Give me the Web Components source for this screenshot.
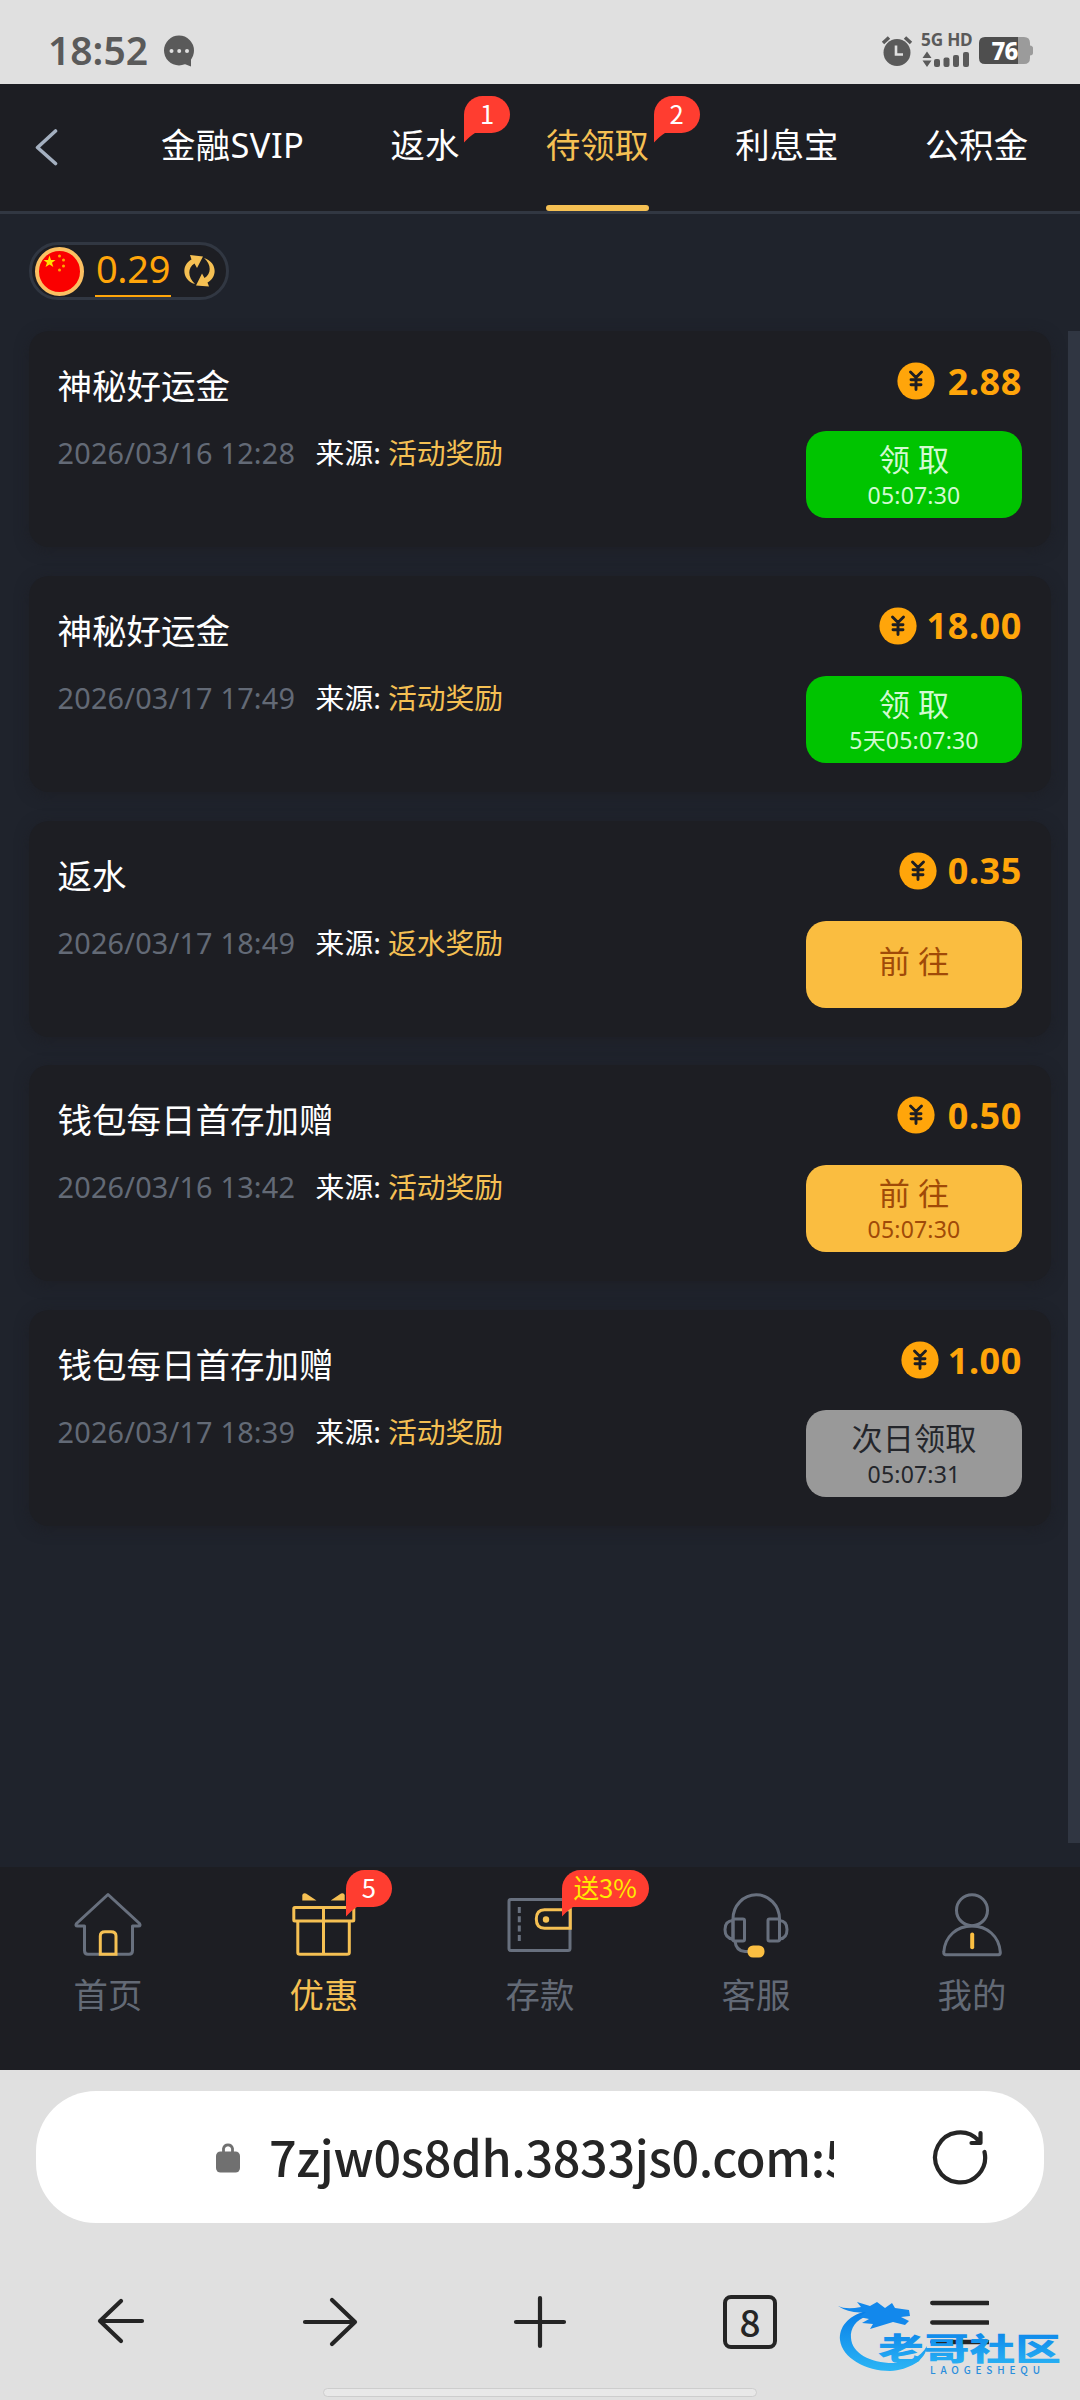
<!DOCTYPE html>
<html lang="zh-CN">
<head>
<meta charset="utf-8">
<title>待领取</title>
<style>
html,body{margin:0;padding:0}
body{width:1080px;height:2400px;overflow:hidden;background:#1f232c;font-family:"Noto Sans","Noto Sans CJK SC",sans-serif;color:#fff}
</style>
</head>
<body>
<phone-screen>
  <status-bar slot="status" time="18:52" battery="76"></status-bar>
  <tab-bar slot="tabs">
    <tab-item style="letter-spacing:.4px">金融SVIP</tab-item>
    <tab-item badge="1">返水</tab-item>
    <tab-item badge="2" active>待领取</tab-item>
    <tab-item>利息宝</tab-item>
    <tab-item>公积金</tab-item>
  </tab-bar>
  <balance-pill>0.29</balance-pill>
  <reward-list>
    <reward-card name="神秘好运金" date="2026/03/16 12:28" source="活动奖励" amount="2.88" amount-width="77" action="领 取" timer="05:07:30" kind="claim"></reward-card>
    <reward-card name="神秘好运金" date="2026/03/17 17:49" source="活动奖励" amount="18.00" amount-width="95.5" action="领 取" timer="5天05:07:30" kind="claim"></reward-card>
    <reward-card name="返水" date="2026/03/17 18:49" source="返水奖励" amount="0.35" amount-width="75.5" action="前 往" kind="go"></reward-card>
    <reward-card name="钱包每日首存加赠" date="2026/03/16 13:42" source="活动奖励" amount="0.50" amount-width="77" action="前 往" timer="05:07:30" kind="go"></reward-card>
    <reward-card name="钱包每日首存加赠" date="2026/03/17 18:39" source="活动奖励" amount="1.00" amount-width="73" action="次日领取" timer="05:07:31" kind="wait"></reward-card>
  </reward-list>
  <bottom-nav slot="nav">
    <nav-item label="首页">
      <svg width="72" height="72" viewBox="0 0 72 72" fill="none" stroke="#68707e" stroke-width="3" stroke-linejoin="round"><path d="M36 5.500 L4.500 34.500 Q3 37 5.500 37 H12.500 V61.500 Q12.500 65.300 16 65.300 H57 Q60.500 65.300 60.500 61.500 V37 H66.500 Q69 37 67.500 34.500 Z"/><path stroke="#f5c053" stroke-linejoin="miter" d="M28.300 65.300 V47 Q28.300 42.700 33 42.700 H39 Q44 42.700 44 47 V65.300 Z"/></svg>
    </nav-item>
    <nav-item label="优惠" badge="5" active>
      <svg width="72" height="72" viewBox="0 0 72 72" fill="none" stroke="#f5c053" stroke-width="3" stroke-linejoin="round"><rect x="5.800" y="18.500" width="60" height="13.500" rx="1"/><path d="M9.800 32 V63.500 Q9.800 65.300 12 65.300 H59 Q61.300 65.300 61.300 63.500 V32 M35.500 18.500 V65.300"/><path stroke="none" fill="#f5c053" d="M14.300 11.500 V6 Q15 3.500 18 4.500 L28.500 11.500Z M56.700 11.500 V6 Q56 3.500 53 4.500 L42.700 11.500Z"/></svg>
    </nav-item>
    <nav-item label="存款" badge="送3%" hot>
      <svg width="72" height="72" viewBox="0 0 72 72" fill="none" stroke="#68707e" stroke-width="3"><rect x="5" y="10.500" width="61" height="51" rx="2"/><path d="M15.300 18 V53" stroke-dasharray="6 3.300"/><path stroke="#f5c053" d="M66.300 20.800 H40.500 Q32.300 21 32.300 30 Q32.300 39.200 40.500 39.200 H66.300 Z"/><circle cx="42" cy="30.500" r="3.200" fill="#f5c053" stroke="none"/></svg>
    </nav-item>
    <nav-item label="客服">
      <svg width="72" height="72" viewBox="0 0 72 72" fill="none" stroke="#68707e" stroke-width="3"><path d="M13 52 V30 A23 24 0 0 1 59.500 30 V52"/><rect x="13" y="30" width="11.500" height="22" rx="1.500"/><rect x="48" y="30" width="11.500" height="22" rx="1.500"/><path d="M13 31.500 Q5 32 5 40.500 Q5 49.500 13 50 M59.500 31.500 Q67 32 67 40.500 Q67 49.500 59.500 50 M15 52 Q16 62 25 62.500 H29"/><rect x="27.500" y="56.500" width="17" height="12" rx="5.500" fill="#fbbf42" stroke="none"/></svg>
    </nav-item>
    <nav-item label="我的">
      <svg width="72" height="72" viewBox="0 0 72 72" fill="none" stroke="#68707e" stroke-width="3" stroke-linejoin="round"><circle cx="36" cy="21.200" r="15.500"/><path d="M9.500 65.800 Q7.500 65.500 7.800 63 C9 47 21 37 36 37 C51 37 63 47 64.300 63 Q64.500 65.500 62.500 65.800 Z"/><path stroke="#fbbf42" stroke-width="4" stroke-linecap="round" d="M36.200 45.500 V58.300"/></svg>
    </nav-item>
  </bottom-nav>
  <browser-bar slot="browser" url="7zjw0s8dh.3833js0.com:5" tabs="8"></browser-bar>
</phone-screen>

<script>
function define(name, render) {
  customElements.define(name, class extends HTMLElement {
    connectedCallback() {
      if (this.shadowRoot) return;
      this.attachShadow({ mode: 'open' }).innerHTML = render(this);
    }
  });
}
const attr = (el, name) => el.getAttribute(name) || '';

define('phone-screen', () => `
<style>
:host{display:flex;flex-direction:column;width:1080px;height:2400px}
main{flex:1;min-height:0;background:#1f232c;display:flex;flex-direction:column;align-items:flex-start}
</style>
<slot name="status"></slot><slot name="tabs"></slot><main><slot></slot></main><slot name="nav"></slot><slot name="browser"></slot>`);

define('status-bar', el => `
<style>
:host{display:flex;height:84px;background:#e0e0e0;color:#5a5a5a;align-items:center;justify-content:space-between;box-sizing:border-box;padding:17px 47px 0 48px}
div{display:flex;align-items:center}
.time{font-size:39px;font-weight:650;line-height:44px;height:45px}
.left{gap:15px}.right{gap:8px}
.net{flex-direction:column;align-items:flex-start;gap:4px;width:50px}
.g{font-size:17.200px;font-weight:700;line-height:14px;letter-spacing:-.2px;white-space:nowrap}
.bat{width:54px;height:27px;position:relative;justify-content:flex-start;color:#fff;font-size:24px;font-weight:800;letter-spacing:-.8px}
.bat svg{position:absolute;left:0;top:0}.bat span{position:relative;padding-left:12.500px;line-height:27px}
</style>
<div class="left"><span class="time">${attr(el, 'time')}</span>
<svg width="32" height="32" viewBox="0 0 32 32"><circle cx="16" cy="15.500" r="15" fill="#5a5a5a"/><path d="M19 28 L28 31.500 V23Z" fill="#5a5a5a"/><g fill="#e0e0e0"><circle cx="8.500" cy="16" r="2"/><circle cx="16.200" cy="16" r="2"/><circle cx="24" cy="16" r="2"/></g></svg></div>
<div class="right">
<svg width="32" height="32" viewBox="0 0 32 32" fill="none" stroke="#5a5a5a"><circle cx="16" cy="17.500" r="13.500" fill="#5a5a5a" stroke="none"/><path stroke-width="3.500" d="M2 8 L8 2.500 M24 2.500 L30 8"/><path stroke="#e0e0e0" stroke-width="2.600" d="M15 10.500 V19.500 H22"/></svg>
<div class="net"><span class="g">5G HD</span>
<svg width="50" height="17" viewBox="0 0 50 17" fill="#5a5a5a"><path d="M1.500 7 L6 .500 L10.500 7Z M1.500 9.500 H10.500 L6 16Z"/><rect x="13" y="8" width="6" height="8" rx="2"/><rect x="22.500" y="6.500" width="6" height="9.500" rx="2"/><rect x="32" y="4" width="6" height="12" rx="2"/><rect x="42" y="1" width="6" height="15" rx="2"/></svg></div>
<div class="bat"><svg width="54" height="27" viewBox="0 0 54 27"><path fill="#9b9b9b" d="M39 0 H45 Q51 0 51 6 V8.500 Q54 9 54 11 V16 Q54 18 51 18.500 V21 Q51 27 45 27 H39Z"/><path fill="#4e4e4e" d="M6 0 H39 V27 H6 Q0 27 0 21 V6 Q0 0 6 0Z"/></svg><span>${attr(el, 'battery')}</span></div>
</div>`);

define('tab-bar', () => `
<style>
:host{display:flex;height:130px;box-sizing:border-box;border-bottom:3px solid #313742;background:#1d1e23;padding-left:35px;align-items:stretch}
.back{width:126px;display:flex;align-items:center}
.tabs{display:flex;gap:86.400px}
</style>
<div class="back"><svg width="24" height="38" viewBox="0 0 24 38" fill="none" stroke="#a4b0c0" stroke-width="3.600" stroke-linecap="round" stroke-linejoin="round"><path d="M20.500 2 L2.500 18.500 L20.500 34.500"/></svg></div>
<div class="tabs"><slot></slot></div>`);

define('tab-item', el => {
  const on = el.hasAttribute('active');
  return `
<style>
:host{display:flex;flex-direction:column;justify-content:space-between;position:relative;color:${on ? '#f5c053' : '#fff'}}
span{font-size:34.400px;line-height:48px;padding-top:37px;white-space:nowrap}
i{height:6px;border-radius:3px;background:${on ? '#f5c053' : 'transparent'}}
bubble-badge{position:absolute;left:calc(100% + 5px);top:12px}
</style>
<span><slot></slot></span><i></i>${attr(el, 'badge') ? `<bubble-badge>${attr(el, 'badge')}</bubble-badge>` : ''}`;
});

define('bubble-badge', el => `
<style>
:host{display:block;color:${el.hasAttribute('hot') ? '#ffec00' : '#fff'}}
.b{display:flex;flex-direction:column;align-items:flex-start}
span{display:block;box-sizing:border-box;min-width:46px;height:37px;padding:0 12px 0 11.500px;border-radius:18.500px 18.500px 18.500px 0;background:#ff3d30;font:25.600px/33px "Noto Sans CJK SC",sans-serif;text-align:center;white-space:nowrap}
svg{display:block;margin-top:-.5px}
</style>
<div class="b"><span><slot></slot></span><svg width="12" height="10" viewBox="0 0 12 10"><path fill="#ff3d30" d="M0 0H11Q6 3 0 9.500Z"/></svg></div>`);

define('balance-pill', () => `
<style>
:host{display:flex;align-items:center;margin:28px 0 0 29px;width:200px;height:58px;box-sizing:border-box;border:3px solid #313742;border-radius:29px;background:#1d1e23;padding-left:3px;color:#ffa50a}
b{font-weight:400;font-size:38px;line-height:41px;height:49px;box-sizing:border-box;border-bottom:2.500px solid #ffa50a;margin:2px 13px 0 11px;width:76px;text-align:center;letter-spacing:-.3px}
</style>
<svg width="49" height="49" viewBox="0 0 49 49"><circle cx="24.500" cy="24.500" r="22.500" fill="#fa0000" stroke="#fbc062" stroke-width="4"/><path fill="#ffe000" d="M14.500 8.500 L16 13 L20.500 13 L17 15.800 L18.300 20 L14.500 17.500 L10.500 20 L12 15.800 L8.500 13 L13 13Z"/><g fill="#ffa800"><circle cx="24.500" cy="9" r="1.500"/><circle cx="28.500" cy="13" r="1.500"/><circle cx="28.500" cy="19" r="1.500"/><circle cx="24.500" cy="23" r="1.500"/></g></svg>
<b><slot></slot></b>
<svg width="31" height="32" viewBox="0 0 31 32" fill="#f5c053"><path d="M6 0 L19 1.500 L13 13 L10.500 8.500 C3 13 4 23 11 29 C-2 25 -3 10 7.500 4.500Z"/><path d="M25 31.500 L12 30.500 L18 18.500 L20.500 23 C28 18 27 9 20 3 C33 7 34 21.500 23.500 27.500Z"/></svg>`);

define('reward-list', () => `
<style>
:host{display:flex;width:1080px;margin-top:31px;justify-content:space-between}
.cards{display:flex;flex-direction:column;gap:28.800px;width:1022px;padding-left:28.800px}
.rail{width:12px;height:1512px;background:#303642}
</style>
<div class="cards"><slot></slot></div><div class="rail"></div>`);

define('reward-card', el => `
<style>
:host{display:flex;justify-content:space-between;box-sizing:border-box;height:216px;padding:0 28.800px;border-radius:20px;background:#1d1e23;box-shadow:0 3px 14px rgba(28,29,33,.6)}
.info{display:flex;flex-direction:column;gap:30px;padding-top:35px}
.name{font-size:34.500px;line-height:40px}
.meta{display:flex;font-size:28.800px;line-height:34px;white-space:nowrap}
.date{color:#636a76;width:258px;letter-spacing:.2px}
.src{color:#f5c053;margin-left:7px}
.side{display:flex;flex-direction:column;gap:28px;padding-top:28px;align-items:flex-end}
.amt{display:flex;align-items:center;gap:10px;height:44px;color:#ffa50a;font-size:36px;font-weight:700;letter-spacing:.6px}
.amt span{display:flex;justify-content:flex-end;width:${attr(el, 'amount-width')}px}
.btn{width:216px;height:87px;box-sizing:border-box;padding-top:3px;border-radius:20px;display:flex;flex-direction:column;align-items:center;justify-content:center;background:var(--bg);color:var(--fg);font-size:31.200px;line-height:38px}
.btn small{font-size:23px;line-height:34px;letter-spacing:.2px}
.claim{--bg:#00c400;--fg:#d2fad2}.go{--bg:#fabd40;--fg:#a04a08}.wait{--bg:#999;--fg:#24262b}
.solo{padding:0 0 6px}
</style>
<div class="info"><div class="name">${attr(el, 'name')}</div>
<div class="meta"><span class="date">${attr(el, 'date')}</span><span>来源:</span><span class="src">${attr(el, 'source')}</span></div></div>
<div class="side"><div class="amt"><svg width="38" height="38" viewBox="0 0 38 38"><circle cx="19" cy="19" r="18.600" fill="#ffa50a"/><path fill="none" stroke="#1d1e23" stroke-width="2.900" stroke-linecap="round" stroke-linejoin="round" d="M13.500 10 L19 15.500 L24.500 10 M19 15.500 V27.500 M14 17.700 H24 M14 22.700 H24"/></svg><span>${attr(el, 'amount')}</span></div>
<div class="btn ${attr(el, 'kind')}${attr(el, 'timer') ? '' : ' solo'}"><span>${attr(el, 'action')}</span>${attr(el, 'timer') ? `<small>${attr(el, 'timer')}</small>` : ''}</div></div>`);

define('bottom-nav', () => `
<style>:host{display:grid;grid-template-columns:repeat(5,1fr);height:203px;background:#1d1e23}</style><slot></slot>`);

define('nav-item', el => `
<style>
:host{display:flex;flex-direction:column;align-items:center;position:relative;padding-top:22px;color:${el.hasAttribute('active') ? '#f5c053' : '#636a76'}}
span{font-size:34.400px;line-height:44px;margin-top:12px}
bubble-badge{position:absolute;left:130px;top:3px}
</style>
<slot></slot><span>${attr(el, 'label')}</span>${attr(el, 'badge') ? `<bubble-badge ${el.hasAttribute('hot') ? 'hot' : ''}>${attr(el, 'badge')}</bubble-badge>` : ''}`);

define('browser-bar', el => `
<style>
:host{display:flex;flex-direction:column;align-items:center;height:330px;box-sizing:border-box;background:#e0e0e0;padding-top:21px;color:#252525;position:relative}
.addr{display:flex;align-items:center;width:1008px;height:132px;border-radius:60px;background:#fff;box-sizing:border-box;padding-left:180px}
.url{width:565px;margin-left:29px;overflow:hidden;white-space:nowrap;font-size:48.500px;font-weight:500;line-height:68px;height:70px;letter-spacing:-.3px;font-family:"Noto Sans CJK SC",sans-serif}
.reload{margin-left:97px}
.tools{display:grid;grid-template-columns:242px 176px 244px 176px 242px;width:1080px;margin-top:69px;height:60px}
.tools>*{place-self:center}
.count{width:54px;height:54px;box-sizing:border-box;border:4px solid #252525;border-radius:8px;font-size:37px;line-height:45px;text-align:center;font-family:"Noto Sans CJK SC",sans-serif;font-weight:500}
.home{width:434px;height:9px;box-sizing:border-box;border:1.500px solid #cdcdcd;border-radius:5px;background:#e8e8e8;margin-top:36px}
site-mark{position:absolute;left:832px;top:222px}
</style>
<div class="addr">
<svg width="24" height="31" viewBox="0 0 24 31"><path d="M7.500 13 V6.500 A4.600 4.600 0 0 1 16.500 6.500 V13" fill="none" stroke="#707070" stroke-width="2.800"/><rect y="9.500" width="24" height="21" rx="4.500" fill="#707070"/></svg>
<div class="url">${attr(el, 'url')}</div>
<svg class="reload" width="58" height="58" viewBox="0 0 58 58" fill="none" stroke="#252525" stroke-width="4.200" stroke-linecap="round" stroke-linejoin="round"><path d="M53.500 24 A25 25 0 1 1 47.500 12.500 M49.500 5 V15 H40.500"/></svg>
</div>
<div class="tools">
<svg width="56" height="56" viewBox="0 0 56 56" fill="none" stroke="#252525" stroke-width="4.200" stroke-linecap="round" stroke-linejoin="round"><path d="M49 27 H7 M28 7 L7 27 L28 47"/></svg>
<svg width="56" height="56" viewBox="0 0 56 56" fill="none" stroke="#252525" stroke-width="4.200" stroke-linecap="round" stroke-linejoin="round"><path d="M3 28 H53 M30 6 L53 28 L30 50"/></svg>
<svg width="56" height="56" viewBox="0 0 56 56" fill="none" stroke="#252525" stroke-width="4.200" stroke-linecap="round"><path d="M4 28 H52 M28 4 V52"/></svg>
<div class="count">${attr(el, 'tabs')}</div>
<svg width="60" height="56" viewBox="0 0 60 56" stroke="#252525" stroke-width="4.300" stroke-linecap="round"><path d="M3.200 9 H58.800 M3.200 28.500 H58.800 M3.200 48 H58.800"/></svg>
</div>
<div class="home"></div>
<site-mark></site-mark>`);

define('site-mark', () => `
<style>:host{display:block}svg{display:block}text{font-family:"Noto Sans CJK SC",sans-serif}</style>
<svg width="236" height="88" viewBox="0 0 236 88">
<defs><linearGradient id="g" x1="0" y1="0" x2="0" y2="1"><stop offset="0" stop-color="#087ee8"/><stop offset="1" stop-color="#2bb5f5"/></linearGradient></defs>
<path fill="url(#g)" d="M34 19 C15 24 7 36 8 48 C10 66 34 79 58 79 C77 78 94 68 95 54 C88 66 76 71 61 71 C38 71 20 61 19 46 C18 36 24 28 35 24Z"/>
<path fill="#1288ec" d="M6 14 Q14 18 29 15 L25 10 L38 14 L45 10 L53 16 L60 11 L63 16 L77 18 L78 24 L69 25 L77 29 L73 33 L61 30 L48 34 L38 37 L41 32 L30 31 L37 27 L27 25 L34 20 Q18 22 6 14Z"/>
<text x="46" y="67.500" font-size="31" font-weight="900" fill="url(#g)" textLength="183" lengthAdjust="spacingAndGlyphs">老哥社区</text>
<text x="98" y="81.500" font-size="10" font-weight="500" fill="#2a8edc" textLength="110" lengthAdjust="spacing">LAOGESHEQU</text>
</svg>`);
</script>
</body>
</html>
